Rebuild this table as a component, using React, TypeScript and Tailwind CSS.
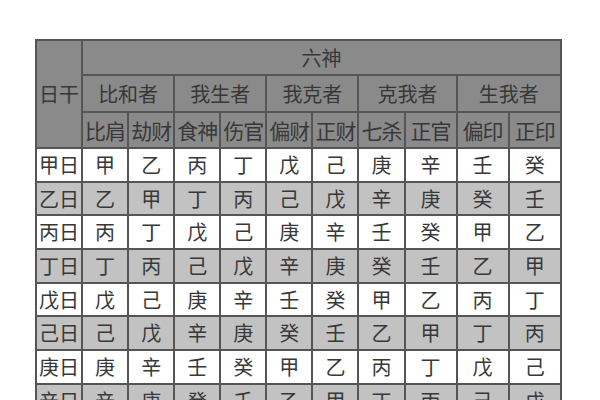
const stems = ['甲', '乙', '丙', '丁', '戊', '己', '庚', '辛', '壬', '癸'];

const rows = [
  ['甲', '乙', '丙', '丁', '戊', '己', '庚', '辛', '壬', '癸'],
  ['乙', '甲', '丁', '丙', '己', '戊', '辛', '庚', '癸', '壬'],
  ['丙', '丁', '戊', '己', '庚', '辛', '壬', '癸', '甲', '乙'],
  ['丁', '丙', '己', '戊', '辛', '庚', '癸', '壬', '乙', '甲'],
  ['戊', '己', '庚', '辛', '壬', '癸', '甲', '乙', '丙', '丁'],
  ['己', '戊', '辛', '庚', '癸', '壬', '乙', '甲', '丁', '丙'],
  ['庚', '辛', '壬', '癸', '甲', '乙', '丙', '丁', '戊', '己'],
  ['辛', '庚', '癸', '壬', '乙', '甲', '丁', '丙', '己', '戊'],
  ['壬', '癸', '甲', '乙', '丙', '丁', '戊', '己', '庚', '辛'],
  ['癸', '壬', '乙', '甲', '丁', '丙', '己', '戊', '辛', '庚'],
];

const groups = ['比和者', '我生者', '我克者', '克我者', '生我者'];
const gods = ['比肩', '劫财', '食神', '伤官', '偏财', '正财', '七杀', '正官', '偏印', '正印'];
const widths = [46, 46, 46, 46, 46, 46, 46, 46, 52, 52, 52];

const cell = 'border-2 border-[#555555] text-center align-middle p-0 leading-none';

export default function App() {
  return (
    <div
      className="w-[600px] h-[400px] overflow-hidden bg-white pt-[39px] pl-[35px]"
      style={{fontFamily: '"Noto Sans CJK SC", "Noto Sans", sans-serif'}}
    >
      <table className="table-fixed border-collapse w-[527px] text-[20px] text-[#383838]">
        <colgroup>
          {widths.map((w, i) => (
            <col key={i} style={{width: w}} />
          ))}
        </colgroup>
        <thead className="bg-[#8a8a8a]">
          <tr className="h-[35px]">
            <th rowSpan={3} className={`${cell} font-normal`}>日干</th>
            <th colSpan={10} className={`${cell} font-normal`}>六神</th>
          </tr>
          <tr className="h-[37px]">
            {groups.map((g) => (
              <th key={g} colSpan={2} className={`${cell} font-normal`}>
                {g}
              </th>
            ))}
          </tr>
          <tr className="h-[36px]">
            {gods.map((g) => (
              <th key={g} className={`${cell} font-normal text-[21px] tracking-[-1px] whitespace-nowrap`}>
                {g}
              </th>
            ))}
          </tr>
        </thead>
        <tbody>
          {rows.map((r, i) => (
            <tr key={i} className={`h-[33.7px] ${i % 2 === 1 ? 'bg-[#c2c2c2]' : 'bg-white'}`}>
              <td className={`${cell} whitespace-nowrap`}>{stems[i]}日</td>
              {r.map((s, j) => (
                <td key={j} className={cell}>
                  {s}
                </td>
              ))}
            </tr>
          ))}
        </tbody>
      </table>
    </div>
  );
}
